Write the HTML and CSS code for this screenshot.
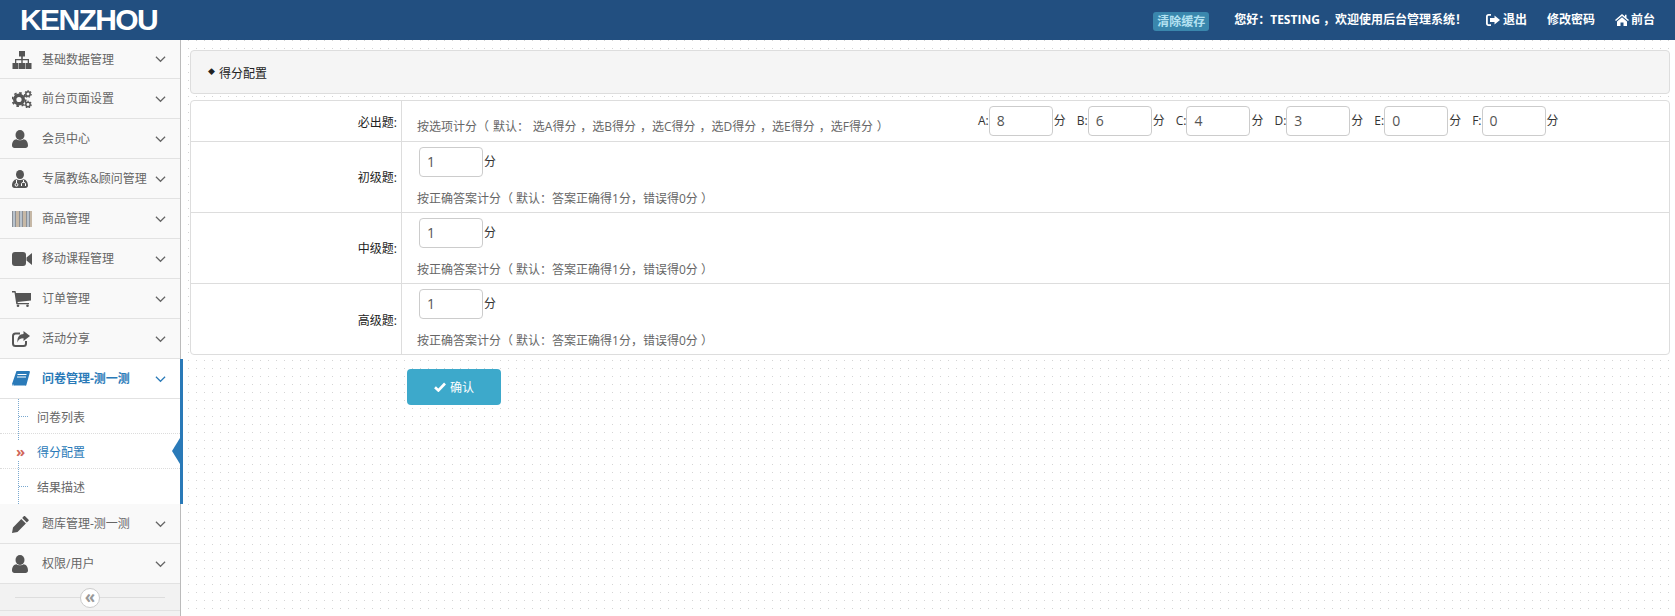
FILE: index.html
```html
<!DOCTYPE html>
<html lang="zh-CN">
<head>
<meta charset="utf-8">
<title>得分配置</title>
<link rel="stylesheet" href="styles.css">
</head>
<body>
<header class="topbar">
  <div class="logo">KENZHOU</div>
  <nav class="topnav">
    <a class="badge">清除缓存</a>
    <span class="greet">您好：TESTING ，欢迎使用后台管理系统！</span>
    <a class="toplink"><svg class="ti" viewBox="0 0 14 12"><path d="M5 0H2.500C1 0 0 1 0 2.500v7C0 11 1 12 2.500 12H5v-1.800H2.800c-.5 0-1-.4-1-1V2.800c0-.6.5-1 1-1H5zM8.500 1.500V4H4v4h4.500v2.500L14 6z" fill="#fff"/></svg>退出</a>
    <a class="toplink">修改密码</a>
    <a class="toplink"><svg class="ti home" viewBox="0 0 14 12"><path d="M7 0 0 6l1 1 6-5 6 5 1-1-2.500-2.100V.7H10v1.900zM2 7.500V12h3.500V8.500h3V12H12V7.500L7 3.300z" fill="#fff"/></svg>前台</a>
  </nav>
</header>
<div class="layout">
  <aside class="sidebar">
    <a class="item first"><span class="ic"><svg viewBox="0 0 20 18" width="20" height="18"><path d="M7 0h6v5.500h-2.200V8H17v4h2.500v6h-6v-6h2.200V9.200h-5V12h2.300v6H7v-6h2.300V9.200h-5V12h2.200v6h-6v-6H3V8h6.200V5.500H7z" fill="#555"/></svg></span><span class="lb">基础数据管理</span><svg class="chev" viewBox="0 0 12 8"><path d="M1 1.500 6 6.500l5-5" fill="none" stroke="#666" stroke-width="1.300"/></svg></a>
    <a class="item"><span class="ic"><svg viewBox="0 0 20 18" width="20" height="18"><circle cx="7" cy="9.500" r="4.300" fill="none" stroke="#555" stroke-width="3.400"/><circle cx="7" cy="9.500" r="6.700" fill="none" stroke="#555" stroke-width="1.800" stroke-dasharray="2.600 2.660"/><circle cx="16" cy="4" r="2.200" fill="none" stroke="#555" stroke-width="1.500"/><circle cx="16" cy="4" r="3.300" fill="none" stroke="#555" stroke-width="1.100" stroke-dasharray="1.500 1.400"/><circle cx="16" cy="14.500" r="2.200" fill="none" stroke="#555" stroke-width="1.500"/><circle cx="16" cy="14.500" r="3.300" fill="none" stroke="#555" stroke-width="1.100" stroke-dasharray="1.500 1.400"/></svg></span><span class="lb">前台页面设置</span><svg class="chev" viewBox="0 0 12 8"><path d="M1 1.500 6 6.500l5-5" fill="none" stroke="#666" stroke-width="1.300"/></svg></a>
    <a class="item"><span class="ic"><svg viewBox="0 0 16 18" width="16" height="18"><ellipse cx="8" cy="5" rx="4.500" ry="5" fill="#555"/><path d="M0 15.500C0 11.500 2 9.500 4.500 9.200 6 10.500 10 10.500 11.500 9.200 14 9.500 16 11.500 16 15.500 16 17 15 18 13.500 18h-11C1 18 0 17 0 15.500z" fill="#555"/></svg></span><span class="lb">会员中心</span><svg class="chev" viewBox="0 0 12 8"><path d="M1 1.500 6 6.500l5-5" fill="none" stroke="#666" stroke-width="1.300"/></svg></a>
    <a class="item"><span class="ic"><svg viewBox="0 0 16 18" width="16" height="18"><ellipse cx="8" cy="4.500" rx="4" ry="4.500" fill="#555"/><path d="M0 15.500C0 12 2 9.500 4.500 9.200c1.500 1 5.500 1 7 0C14 9.500 16 12 16 15.500 16 17 15 18 13.500 18h-11C1 18 0 17 0 15.500z" fill="#555"/><path d="M4.500 10v3M11.500 10v2.500M9.500 16v-2.500c0-1.500 4-1.500 4 0V16" fill="none" stroke="#fff" stroke-width="1"/><circle cx="4.500" cy="14.800" r="1.400" fill="none" stroke="#fff"/></svg></span><span class="lb">专属教练&amp;顾问管理</span><svg class="chev" viewBox="0 0 12 8"><path d="M1 1.500 6 6.500l5-5" fill="none" stroke="#666" stroke-width="1.300"/></svg></a>
    <a class="item"><span class="ic"><svg viewBox="0 0 20 16" width="20" height="16"><path d="M0 0h1v16H0zM3 0h1v16H3zM7 0h1v16H7zM10 0h1v16h-1zM14 0h1v16h-1zM17 0h1v16h-1z" fill="#8a8f96"/><path d="M1 0h2v16H1zM8 0h2v16H8zM15 0h2v16h-2z" fill="#b8c2cc"/><path d="M4 0h3v16H4zM11 0h3v16h-3zM18 0h2v16h-2z" fill="#c6b8a6"/></svg></span><span class="lb">商品管理</span><svg class="chev" viewBox="0 0 12 8"><path d="M1 1.500 6 6.500l5-5" fill="none" stroke="#666" stroke-width="1.300"/></svg></a>
    <a class="item"><span class="ic"><svg viewBox="0 0 20 14" width="20" height="14"><rect width="14" height="14" rx="3" fill="#555"/><path d="M14.500 5.500 20 1v12l-5.500-4.500z" fill="#555"/></svg></span><span class="lb">移动课程管理</span><svg class="chev" viewBox="0 0 12 8"><path d="M1 1.500 6 6.500l5-5" fill="none" stroke="#666" stroke-width="1.300"/></svg></a>
    <a class="item"><span class="ic"><svg viewBox="0 0 19 16" width="19" height="16"><path d="M0 0h3.500l.5 2h15v7.500L5.500 11l.3 1H17v1.300H4.300L2.500 1.500H0z" fill="#555"/><circle cx="6" cy="14.700" r="1.300" fill="#555"/><circle cx="15.500" cy="14.700" r="1.300" fill="#555"/></svg></span><span class="lb">订单管理</span><svg class="chev" viewBox="0 0 12 8"><path d="M1 1.500 6 6.500l5-5" fill="none" stroke="#666" stroke-width="1.300"/></svg></a>
    <a class="item"><span class="ic"><svg viewBox="0 0 18 16" width="18" height="16"><path d="M8 2.500H3.500C2 2.500 1 3.500 1 5v7.500C1 14 2 15 3.500 15h8c1.500 0 2.500-1 2.500-2.500V10" fill="none" stroke="#555" stroke-width="2"/><path d="M11.500 0 18 5l-6.500 5V7.200C8 7.200 6.500 8.500 5.500 11.500 5 6 7.500 3 11.500 3z" fill="#555"/></svg></span><span class="lb">活动分享</span><svg class="chev" viewBox="0 0 12 8"><path d="M1 1.500 6 6.500l5-5" fill="none" stroke="#666" stroke-width="1.300"/></svg></a>
    <a class="item open"><span class="ic"><svg viewBox="0 0 18 16" width="18" height="16"><path d="M4.500 0H17c1 0 1 .8.800 1.500L14.500 13.500c-.2 1-.8 1.500-1.800 1.500H2c-1.500 0-2-1-2-2z" fill="#2a7ab8"/><path d="M5.500 3.500h9M5 6h9" stroke="#fff" stroke-width="1"/><path d="M1 13.500c0 1 .5 1.500 1.500 1.500h11" fill="none" stroke="#fff"/></svg></span><span class="lb">问卷管理-测一测</span><svg class="chev" viewBox="0 0 12 8"><path d="M1 1.500 6 6.500l5-5" fill="none" stroke="#2a7ab8" stroke-width="1.300"/></svg></a>
    <div class="sub">
      <a class="subitem"><span class="tick"></span><span class="subtext">问卷列表</span></a>
      <a class="subitem current"><span class="marks">»</span><span class="subtext">得分配置</span><span class="pointer"></span></a>
      <a class="subitem"><span class="tick"></span><span class="subtext">结果描述</span></a>
    </div>
    <a class="item"><span class="ic"><svg viewBox="0 0 17 17" width="17" height="17"><path d="M12 0c.5-.2 1 0 1.400.4l3 3c.4.4.5 1 .2 1.400l-1.800 1.800-4.600-4.600zM9.300 2.900l4.600 4.600-8.400 8.400L0 17l1-5.600z" fill="#555"/></svg></span><span class="lb">题库管理-测一测</span><svg class="chev" viewBox="0 0 12 8"><path d="M1 1.500 6 6.500l5-5" fill="none" stroke="#666" stroke-width="1.300"/></svg></a>
    <a class="item"><span class="ic"><svg viewBox="0 0 16 18" width="16" height="18"><ellipse cx="8" cy="5" rx="4.500" ry="5" fill="#555"/><path d="M0 15.500C0 11.500 2 9.500 4.500 9.200 6 10.500 10 10.500 11.500 9.200 14 9.500 16 11.500 16 15.500 16 17 15 18 13.500 18h-11C1 18 0 17 0 15.500z" fill="#555"/></svg></span><span class="lb">权限/用户</span><svg class="chev" viewBox="0 0 12 8"><path d="M1 1.500 6 6.500l5-5" fill="none" stroke="#666" stroke-width="1.300"/></svg></a>
    <div class="collapse"><span class="circle">«</span></div>
  </aside>
  <main class="main">
    <div class="crumb"><span class="dia">◆</span><span class="crumbtext">得分配置</span></div>
    <div class="card">
      <div class="row r1">
        <div class="lab">必出题:</div>
        <div class="val inline">
          <span class="hint wide">按选项计分（ 默认： 选A得分 ，选B得分 ，选C得分 ，选D得分 ，选E得分 ，选F得分 ）</span>
          <div class="opts">
            <label class="opt">A:<span class="inp">8</span>分</label>
            <label class="opt">B:<span class="inp">6</span>分</label>
            <label class="opt">C:<span class="inp">4</span>分</label>
            <label class="opt">D:<span class="inp">3</span>分</label>
            <label class="opt">E:<span class="inp">0</span>分</label>
            <label class="opt">F:<span class="inp">0</span>分</label>
          </div>
        </div>
      </div>
      <div class="row">
        <div class="lab">初级题:</div>
        <div class="val"><label class="opt one"><span class="inp">1</span>分</label><span class="hint">按正确答案计分（ 默认：答案正确得1分，错误得0分 ）</span></div>
      </div>
      <div class="row">
        <div class="lab">中级题:</div>
        <div class="val"><label class="opt one"><span class="inp">1</span>分</label><span class="hint">按正确答案计分（ 默认：答案正确得1分，错误得0分 ）</span></div>
      </div>
      <div class="row last">
        <div class="lab">高级题:</div>
        <div class="val"><label class="opt one"><span class="inp">1</span>分</label><span class="hint">按正确答案计分（ 默认：答案正确得1分，错误得0分 ）</span></div>
      </div>
    </div>
    <button class="confirm"><svg class="chk" viewBox="0 0 12 10"><path d="M1 5.200 4.400 8.500 11 1.500" fill="none" stroke="#fff" stroke-width="2.600"/></svg>确认</button>
  </main>
</div>
</body>
</html>
```
FILE: styles.css
```css
* { box-sizing: border-box; }
html, body { margin: 0; padding: 0; height: 100%; overflow: hidden; }
body {
  width: 1675px;
  height: 616px;
  font: 12px/1.4 "Open Sans", "Noto Sans CJK SC", sans-serif;
  color: #333;
  background-color: #fff;
  background-image: radial-gradient(circle at 4.5px 0.5px, #d4d4d4 0.7px, transparent 1px);
  background-size: 8px 8px;
}
a { text-decoration: none; color: inherit; }

.topbar {
  height: 40px;
  background: #224f80;
  display: flex;
  align-items: center;
  justify-content: space-between;
  padding: 0 20px;
}
.logo {
  font: 900 30px/42px "Liberation Sans", sans-serif;
  color: #fff;
  letter-spacing: -1.600px;
  width: 138px;
  white-space: nowrap;
}
.topnav { display: flex; align-items: center; color: #fff; font-weight: 700; }
.badge {
  width: 56px;
  height: 19px;
  line-height: 19px;
  margin-top: 3px;
  text-align: center;
  border-radius: 3px;
  background: #3a87ad;
  color: #b4e2f2;
  margin-right: 25px;
  white-space: nowrap;
}
.greet { margin-right: 19px; white-space: nowrap; }
.toplink { margin-right: 20px; display: flex; align-items: center; white-space: nowrap; }
.toplink:last-child { margin-right: 0; }
.ti { width: 14px; height: 12px; margin-right: 3px; }
.home { margin-right: 2px; }

.layout { display: flex; height: 576px; }
.sidebar {
  position: relative;
  width: 181px;
  flex: none;
  background: #f2f2f2;
  border-right: 1px solid #bbb;
}
.item {
  display: flex;
  align-items: center;
  height: 40px;
  background: #f9f9f9;
  border-bottom: 1px solid #e2e2e2;
  color: #666;
  font-size: 12px;
}
.item.first { height: 39px; }
.ic { width: 42px; flex: none; padding: 1px 0 0 12px; display: flex; align-items: center; }
.lb { flex: 1; white-space: nowrap; padding-top: 2px; }
.chev { width: 11px; height: 8px; margin-right: 14px; flex: none; }
.item .ic svg { display: block; }
.open { background: #fff; color: #2a7ab8; font-weight: 700; }
.sub {
  background: #fff;
  height: 105px;
  position: relative;
}
.sub::before {
  content: "";
  position: absolute;
  left: 18px;
  top: 0;
  bottom: 0;
  border-left: 1px dotted #7aa9d0;
}
.sidebar .sub::after {
  content: "";
  position: absolute;
  top: -40px;
  bottom: 0;
  right: -1px;
  border-right: 3px solid #2a7ab8;
  margin-right: -2px;
}
.subitem {
  position: relative;
  display: flex;
  align-items: center;
  height: 35px;
  padding-left: 37px;
  color: #666;
  border-bottom: 1px dotted #dcdcdc;
}
.subtext { padding-top: 4px; }
.subitem:last-child { border-bottom: none; }
.current { color: #2a7ab8; }
.tick {
  position: absolute;
  left: 19px;
  top: 17px;
  width: 9px;
  border-top: 1px dotted #7aa9d0;
}
.marks {
  position: absolute;
  left: 16px;
  top: 7px;
  font-size: 15px;
  line-height: 20px;
  font-weight: 700;
  background: #fff;
  color: #d0655a;
  z-index: 1;
}
.pointer {
  position: absolute;
  right: 0;
  top: 4px;
  border-style: solid;
  border-width: 13px 8px 13px 0;
  border-color: transparent #2a7ab8 transparent transparent;
}
.collapse {
  position: relative;
  height: 27px;
  border-bottom: 1px solid #e2e2e2;
  background: #f2f2f2;
}
.collapse::before {
  content: "";
  position: absolute;
  left: 15px;
  width: 150px;
  top: 13px;
  border-top: 1px solid #ddd;
}
.circle {
  position: absolute;
  left: 80px;
  top: 4px;
  width: 20px;
  height: 20px;
  border: 1px solid #ccc;
  border-radius: 50%;
  background: #fff;
  color: #999;
  font: 700 17px/15px "Open Sans", sans-serif;
  text-align: center;
}

.main { flex: 1; padding: 10px 5px 0 9px; }
.crumb {
  height: 44px;
  background: #f5f5f5;
  border: 1px solid #ddd;
  border-radius: 4px;
  display: flex;
  align-items: center;
  padding-left: 17px;
  color: #222;
}
.dia { font-size: 7px; margin-right: 4px; color: #222; }
.crumbtext { padding-top: 4px; }
.card {
  margin-top: 6px;
  background: #fff;
  border: 1px solid #ddd;
  border-radius: 4px;
  height: 255px;
}
.row { display: flex; height: 71px; border-bottom: 1px solid #ddd; }
.row.r1 { height: 41px; }
.row.last { border-bottom: none; }
.lab {
  width: 211px;
  flex: none;
  border-right: 1px solid #ddd;
  display: flex;
  align-items: center;
  justify-content: flex-end;
  padding: 3px 4px 0 0;
  color: #222;
}
.r1 .lab { padding-top: 5px; }
.val { flex: 1; padding: 5px 0 0 15px; display: flex; flex-direction: column; align-items: flex-start; }
.val.inline { flex-direction: row; }
.hint { color: #666; white-space: nowrap; margin-top: 13px; line-height: 17px; }
.hint.wide { width: 561px; flex: none; margin-top: 12px; word-spacing: .8px; }
.opts { display: flex; gap: 11px; }
.opt { display: flex; align-items: center; height: 30px; color: #333; white-space: nowrap; }
.opt.one { margin-left: 2px; }
.inp {
  display: block;
  width: 64px;
  height: 30px;
  margin-right: 1px;
  padding-left: 7px;
  border: 1px solid #ccc;
  border-radius: 4px;
  background: #fff;
  color: #555;
  font-size: 14px;
  line-height: 28px;
}
.confirm {
  display: flex;
  align-items: center;
  justify-content: center;
  margin: 14px 0 0 217px;
  width: 94px;
  height: 36px;
  background: #3da9cb;
  border: 0;
  border-radius: 4px;
  color: #fff;
  font: 12px "Open Sans", "Noto Sans CJK SC", sans-serif;
}
.chk { width: 12px; height: 10px; margin-right: 4px; }
```
